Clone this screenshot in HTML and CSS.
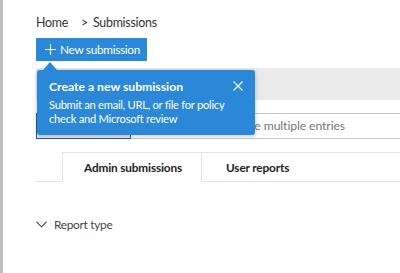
FILE: index.html
```html
<!DOCTYPE html>
<html>
<head>
<meta charset="utf-8">
<link rel="stylesheet" href="styles.css">
</head>
<body>
<div class="app">
  <div class="rail"></div>
  <div class="main">
    <nav class="crumbs"><span>Home</span><span class="sep">&gt;</span><span>Submissions</span></nav>
    <div class="action-wrap">
      <button class="primary"><svg class="plus" width="11" height="11" viewBox="0 0 11 11"><path d="M5.5 0v11M0 5.5h11" stroke="#fff" stroke-width="1.1" fill="none"/></svg><span>New submission</span></button>
      <div class="callout">
        <div class="beak"></div>
        <div class="callout-head">
          <span class="callout-title">Create a new submission</span>
          <svg class="close" width="10" height="10" viewBox="0 0 10 10"><path d="M0.5 0.5l9 9M9.5 0.5l-9 9" stroke="#fff" stroke-width="1.1" fill="none"/></svg>
        </div>
        <p class="callout-body">Submit an email, URL, or file for policy<br>check and Microsoft review</p>
      </div>
    </div>
    <div class="band"></div>
    <div class="searchrow">
      <div class="btn-outline"></div>
      <div class="input">Search or validate multiple entries</div>
    </div>
    <div class="tabs">
      <div class="tab-spacer"></div>
      <div class="tab active">Admin submissions</div>
      <div class="tab last">User reports</div>
      <div class="tab-fill"></div>
    </div>
    <div class="filter">
      <svg class="chev" width="11" height="7" viewBox="0 0 11 7"><path d="M0.5 0.8l5 5 5-5" stroke="#444" stroke-width="1.1" fill="none"/></svg>
      <span>Report type</span>
    </div>
  </div>
</div>
</body>
</html>
```

FILE: styles.css
```css
html, body {
  margin: 0;
  padding: 0;
  background: #fff;
}
body {
  font-family: "Lato", "Open Sans", sans-serif;
  color: #333;
  width: 400px;
  height: 273px;
  overflow: hidden;
  white-space: nowrap;
}
.app {
  display: flex;
  height: 273px;
}
.rail {
  width: 3px;
  background: #bfbfbf;
  flex: none;
}
.main {
  flex: 1;
  padding-left: 33px;
  padding-top: 14px;
  min-width: 0;
}
.crumbs {
  display: flex;
  font-size: 12.4px;
  letter-spacing: -0.25px;
  line-height: 16px;
  height: 16px;
  padding-top: 1px;
  color: #333;
}
.crumbs .sep {
  margin: 0 5px 0 13px;
}
.action-wrap {
  position: relative;
  margin-top: 7px;
  height: 23px;
}
.primary {
  display: flex;
  align-items: center;
  height: 23px;
  width: 111px;
  margin: 0;
  padding: 0 0 0 9px;
  border: none;
  background: #2b88d8;
  color: #fff;
  font-family: inherit;
  font-size: 11.8px;
  letter-spacing: -0.3px;
  white-space: nowrap;
}
.plus {
  margin-right: 4px;
}
.callout {
  position: absolute;
  left: 1px;
  top: 32px;
  width: 218px;
  height: 65px;
  box-sizing: border-box;
  background: #2b88d8;
  border-radius: 3px;
  padding: 9px 12px 0 12px;
  color: #fff;
  box-shadow: 0 1px 4px rgba(0,0,0,0.25);
  z-index: 2;
}
.beak {
  position: absolute;
  left: 6px;
  top: -8px;
  width: 0;
  height: 0;
  border-left: 7px solid transparent;
  border-right: 7px solid transparent;
  border-bottom: 8px solid #2b88d8;
}
.callout-head {
  display: flex;
  justify-content: space-between;
  align-items: center;
  height: 14px;
}
.callout-title {
  font-weight: 700;
  font-size: 12.2px;
}
.close {
  margin-right: 0;
  margin-top: -1px;
}
.callout-body {
  margin: 5px 0 0;
  font-size: 11.2px;
  letter-spacing: -0.28px;
  line-height: 14px;
}
.band {
  margin-top: 7px;
  height: 32px;
  background: #eaeaea;
}
.searchrow {
  display: flex;
  margin-top: 13px;
  height: 26px;
}
.btn-outline {
  width: 95px;
  flex: none;
  box-sizing: border-box;
  border: 1px solid #1f5f9c;
  background: #e6e6e6;
}
.input {
  flex: 1;
  box-sizing: border-box;
  border-top: 1px solid #c8c8c8;
  border-bottom: 1px solid #c8c8c8;
  padding-left: 37px;
  font-size: 12.2px;
  letter-spacing: -0.1px;
  line-height: 24px;
  color: #777;
  overflow: hidden;
}
.tabs {
  display: flex;
  margin-top: 13px;
  height: 30px;
}
.tab-spacer {
  width: 26px;
  flex: none;
  border-bottom: 1px solid #e3e3e3;
}
.tab {
  box-sizing: border-box;
  flex: none;
  border: 1px solid #e3e3e3;
  font-size: 11.8px;
  letter-spacing: -0.15px;
  font-weight: 700;
  color: #222;
  line-height: 29px;
}
.tab.active {
  width: 140px;
  border-bottom-color: transparent;
  padding-left: 21px;
}
.tab.last {
  border-left: none;
  border-right: none;
  padding-left: 24px;
  padding-right: 10px;
}
.tab-fill {
  flex: 1;
  border-top: 1px solid #e3e3e3;
  border-bottom: 1px solid #e3e3e3;
}
.filter {
  display: flex;
  align-items: center;
  margin-top: 35px;
  font-size: 11.9px;
  letter-spacing: -0.3px;
  color: #444;
}
.chev {
  margin-right: 7px;
}
```
